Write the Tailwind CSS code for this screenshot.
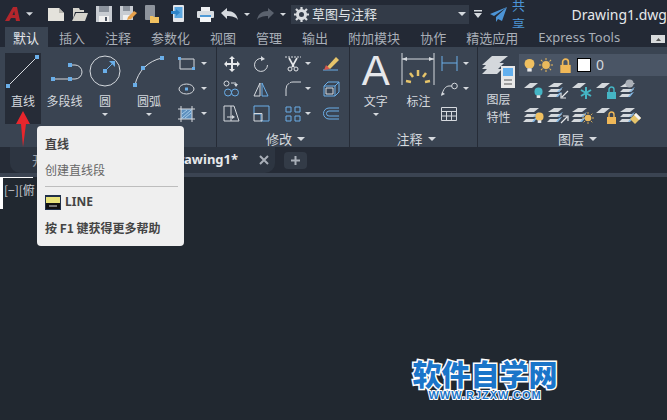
<!DOCTYPE html>
<html lang="zh">
<head>
  <meta charset="UTF-8">
  <title>Drawing1.dwg</title>
  <script src="https://cdn.jsdelivr.net/npm/@tailwindcss/browser@4"></script>
</head>
<body class="bg-[#212830]">
  <svg class="hidden">
    <symbol id="caret" viewBox="0 0 8 4"><path d="M0 0h8L4 4z" fill="#d5d9de"/></symbol>
    <symbol id="sheet" viewBox="0 0 24 18"><path d="M7 1h8L9 6H1z" fill="#d4d8dc"/></symbol>
    <symbol id="stack" viewBox="0 0 24 18"><path d="M7 1h9l-5 4H1zM4 7h11l-3 3H1zM3 12h10l-3 3H0z" fill="#d4d8dc"/><path d="M14 6l2-1-4 5h-2zM12 11l3-1-4 5H9z" fill="#7fb2dd"/></symbol>
    <symbol id="bulb" viewBox="0 0 10 12"><circle cx="5" cy="4.5" r="4.5"/><rect x="3" y="8.5" width="4" height="3" fill="#e8e8e8"/></symbol>
    <symbol id="lock" viewBox="0 0 11 13"><path d="M3 6V3.5a2.5 2.5 0 015 0V6" fill="none" stroke="currentColor" stroke-width="1.4"/><rect x="1" y="6" width="9" height="7"/></symbol>
    <symbol id="sun" viewBox="0 0 18 18"><circle cx="9" cy="9" r="5" fill="#e9b95c"/><path d="M9 0v3M9 15v3M0 9h3M15 9h3M2.5 2.5l2 2M13.500 13.500l2 2M15.500 2.500l-2 2M4.500 13.500l-2 2" stroke="#e9b95c" stroke-width="1.300"/></symbol>
  </svg>

  <div class="relative w-[667px] h-[420px] overflow-hidden bg-[#212830] text-[#d5d9de] text-[13px] font-['Noto_Sans_CJK_SC','Liberation_Sans',sans-serif]">

    <!-- title bar -->
    <div class="flex items-center h-[28px] bg-[#232935]">
      <div class="flex items-center w-[48px] pl-[5px] gap-[5px] shrink-0">
        <svg width="16" height="14" viewBox="0 0 16 14"><path d="M0 14L8 0h4l3 14h-4l-.6-3H6l-1.700 3zM7.500 8h2.400l-.7-4z" fill="#b3262c"/></svg>
        <svg width="7" height="4"><use href="#caret"/></svg>
      </div>
      <div class="flex items-center gap-[8px] shrink-0">
        <svg width="16" height="13" viewBox="0 0 16 13"><path d="M0 0h11l5 5v8H0z" fill="#e4e2dc"/><path d="M11 0v5h5z" fill="#b6b4ae"/></svg>
        <svg width="16" height="13" viewBox="0 0 16 13"><path d="M1 0h6l1 2h4v2H3L1 11z" fill="#d5d3cc"/><path d="M4 5h12l-3 8H0z" fill="#d5d3cc"/></svg>
        <svg width="16" height="16" viewBox="0 0 16 16"><path d="M0 0h16v16H0z" fill="#c8ccd2"/><path d="M3 0h10v6H3z" fill="#8b929c"/><path d="M3 10h10v6H3z" fill="#f0f0f0"/><path d="M9 11h2v4H9z" fill="#4b5260"/></svg>
        <svg width="17" height="16" viewBox="0 0 17 16"><path d="M0 0h13v14H0z" fill="#c8ccd2"/><path d="M3 0h7v5H3z" fill="#8b929c"/><path d="M3 9h7v5H3z" fill="#f0f0f0"/><path d="M7 14l1-3 6-6 3 2-6 6z" fill="#e6a04a"/></svg>
      </div>
      <div class="flex items-center gap-[12px] ml-[8px] shrink-0">
        <svg width="14" height="18" viewBox="0 0 14 18"><rect width="10" height="15" rx="1" fill="#8d939c"/><path d="M5 11h3l1 1h5v6H5z" fill="#f0c060"/></svg>
        <svg width="14" height="18" viewBox="0 0 14 18"><rect x="2" width="11" height="17" rx="1" fill="#e4e6ea"/><rect x="3.500" y="2" width="8" height="11" fill="#5aa6e0"/><path d="M0 6h5V4l4 3.500L5 11V9H0z" fill="#2f84c8"/></svg>
        <svg width="17" height="15" viewBox="0 0 17 15"><rect x="4" width="9" height="4" fill="#eef0f2"/><rect y="4" width="17" height="7" rx="1" fill="#d8dde2"/><rect x="3" y="8" width="11" height="7" fill="#f4f6f8"/><rect x="3" y="8" width="11" height="2" fill="#4f9ad6"/></svg>
      </div>
      <svg class="ml-[7px] shrink-0" width="17" height="12" viewBox="0 0 17 12"><path d="M0 5l6-5v3c6 0 10 3 11 9-2-3-6-4-11-4v3z" fill="#d5d9de"/></svg>
      <svg class="ml-[6px] shrink-0" width="6" height="3"><use href="#caret"/></svg>
      <svg class="ml-[7px] shrink-0" width="17" height="12" viewBox="0 0 17 12"><path d="M17 5l-6-5v3C5 3 1 6 0 12c2-3 6-4 11-4v3z" fill="#5b626e"/></svg>
      <svg class="ml-[6px] shrink-0" width="6" height="3"><use href="#caret"/></svg>
      <div class="flex items-center w-[178px] h-[19px] ml-[5px] pl-[3px] bg-[#333b48] shrink-0">
        <svg width="15" height="15" viewBox="0 0 15 15"><circle cx="7.500" cy="7.500" r="4" fill="none" stroke="#d9dce0" stroke-width="3"/><path d="M7.500 0v3M7.500 12v3M0 7.500h3M12 7.500h3M2 2l2 2M11 11l2 2M13 2l-2 2M4 11l-2 2" stroke="#d9dce0" stroke-width="2.200"/></svg>
        <span class="ml-[3px] text-[#dfe2e6]">草图与注释</span>
        <svg class="ml-auto mr-[3px]" width="8" height="4"><use href="#caret"/></svg>
      </div>
      <svg class="ml-[5px] shrink-0" width="8" height="8" viewBox="0 0 8 8"><path d="M0 0h8v1.500H0z M0 3h8L4 8z" fill="#d5d9de"/></svg>
      <svg class="ml-[8px] shrink-0" width="17" height="15" viewBox="0 0 17 15"><path d="M17 0L0 7l4 2zM17 0L6 10v5l2-3 4 2z" fill="#4c94d6"/></svg>
      <span class="ml-[5px] text-[#4c94d6]">共享</span>
      <span class="ml-[43px] text-[14px] text-[#e6e8eb] font-['Noto_Sans',sans-serif] whitespace-nowrap">Drawing1.dwg</span>
    </div>

    <!-- ribbon tabs -->
    <div class="flex items-center h-[19px] bg-[#232935] text-[#a9afb8] gap-[20px] pl-[13px] relative whitespace-nowrap">
      <span class="relative text-[#e4e6ea] before:absolute before:-left-[8px] before:-right-[9px] before:-top-[1px] before:-bottom-[1px] before:bg-[#3a4452] before:-z-0"><span class="relative">默认</span></span>
      <span>插入</span><span>注释</span><span>参数化</span><span>视图</span><span>管理</span><span>输出</span><span>附加模块</span><span>协作</span><span>精选应用</span>
      <span class="font-['Noto_Sans',sans-serif]">Express Tools</span>
      <div class="absolute left-[651px] top-[7px] flex items-center justify-center w-[14px] h-[8px] bg-[#d8dadc]">
        <svg width="5" height="3" viewBox="0 0 5 3"><path d="M0 3h5L2.500 0z" fill="#555"/></svg>
      </div>
    </div>

    <!-- ribbon -->
    <div class="flex h-[100px] bg-[#3a4452] text-[12px] text-[#d5d9de] leading-[18px]">

      <!-- draw -->
      <div class="flex w-[217px] pl-[5px] border-r border-[#262c37] shrink-0">
        <div class="flex flex-col items-center w-[36px] h-[71px] mt-[6px] bg-[#262c37]">
          <svg width="36" height="36" viewBox="0 0 36 36"><path d="M3 33L32 4" stroke="#d5d9de"/><rect x="1" y="31" width="4" height="4" fill="#6aaee8"/><rect x="30" y="2" width="4" height="4" fill="#6aaee8"/></svg>
          <span class="mt-[3px]">直线</span>
        </div>
        <div class="flex flex-col items-center w-[47px] pt-[6px]">
          <svg width="36" height="36" viewBox="0 0 36 36"><path d="M8 26h20a7 7 0 000-14h-3" fill="none" stroke="#d5d9de"/><rect x="4" y="24" width="4" height="4" fill="#6aaee8"/><rect x="21" y="24" width="4" height="4" fill="#6aaee8"/><rect x="21" y="10" width="4" height="4" fill="#6aaee8"/></svg>
          <span class="mt-[3px]">多段线</span>
        </div>
        <div class="flex flex-col items-center w-[34px] pt-[6px]">
          <svg width="34" height="36" viewBox="0 0 34 36"><circle cx="17" cy="18" r="15" fill="none" stroke="#d5d9de"/><path d="M17 18l8-8" stroke="#6aaee8"/><path d="M21 8h6v6z" fill="#6aaee8"/><rect x="15" y="16" width="4" height="4" fill="#6aaee8"/></svg>
          <span class="mt-[3px]">圆</span>
          <svg class="mt-[3px]" width="6" height="3"><use href="#caret"/></svg>
        </div>
        <div class="flex flex-col items-center w-[54px] pt-[6px]">
          <svg width="36" height="36" viewBox="0 0 36 36"><path d="M4 32C7 18 17 8 31 5" fill="none" stroke="#d5d9de"/><rect x="2" y="30" width="4" height="4" fill="#6aaee8"/><rect x="10" y="13" width="4" height="4" fill="#6aaee8"/><rect x="29" y="3" width="4" height="4" fill="#6aaee8"/></svg>
          <span class="mt-[3px]">圆弧</span>
          <svg class="mt-[3px]" width="6" height="3"><use href="#caret"/></svg>
        </div>
        <div class="flex flex-col w-[38px] pt-[4px]">
          <div class="flex items-center h-[25px] gap-[6px] pl-[2px]">
            <svg width="17" height="14" viewBox="0 0 17 14"><path d="M2 2h14v10H2z" fill="none" stroke="#d5d9de"/><rect x="0" y="0" width="3" height="3" fill="#6aaee8"/><rect x="14" y="10" width="3" height="3" fill="#6aaee8"/></svg>
            <svg width="6" height="3"><use href="#caret"/></svg>
          </div>
          <div class="flex items-center h-[25px] gap-[6px] pl-[2px]">
            <svg width="17" height="14" viewBox="0 0 17 14"><ellipse cx="8.500" cy="7" rx="7.500" ry="5" fill="none" stroke="#d5d9de"/><rect x="7" y="5.500" width="3" height="3" fill="#6aaee8"/></svg>
            <svg width="6" height="3"><use href="#caret"/></svg>
          </div>
          <div class="flex items-center h-[25px] gap-[6px] pl-[2px]">
            <svg width="17" height="16" viewBox="0 0 17 16"><path d="M3 3h11v10H3z" fill="#5d8fbd"/><path d="M3 0v16M14 0v16M0 3h17M0 13h17" stroke="#d5d9de"/><path d="M4 12l9-8M7 12l6-5M4 8l5-4" stroke="#a6cbe9"/></svg>
            <svg width="6" height="3"><use href="#caret"/></svg>
          </div>
        </div>
      </div>

      <!-- modify -->
      <div class="flex flex-col w-[133px] border-r border-[#262c37] shrink-0">
        <div class="h-[83px] pt-[4px] grid grid-cols-[29px_30px_40px_30px] grid-rows-[25px_25px_25px] items-center">
          <svg class="mx-auto" width="16" height="16" viewBox="0 0 16 16"><path d="M8 0l3 3H9v4h4V5l3 3-3 3V9H9v4h2l-3 3-3-3h2V9H3v2L0 8l3-3v2h4V3H5z" fill="#e6e8eb"/></svg>
          <svg class="mx-auto" width="16" height="16" viewBox="0 0 16 16"><path d="M9 2.500A6.500 6.500 0 1014.500 9" fill="none" stroke="#d5d9de"/><path d="M8 0l4 3-4 2z" fill="#d5d9de"/></svg>
          <div class="flex items-center gap-[4px] pl-[9px]">
            <svg width="16" height="17" viewBox="0 0 16 17"><path d="M0 2h16" stroke="#d5d9de" stroke-dasharray="2 1"/><path d="M4 3l5 9M12 3l-5 9" stroke="#e6e8eb" stroke-width="1.600"/><circle cx="5" cy="14" r="2" fill="none" stroke="#e6e8eb"/><circle cx="11" cy="14" r="2" fill="none" stroke="#e6e8eb"/></svg>
            <svg width="6" height="3"><use href="#caret"/></svg>
          </div>
          <svg class="mx-auto" width="18" height="16" viewBox="0 0 18 16"><path d="M1 14h15" stroke="#6aaee8"/><path d="M4 12L14 1l3 3-9 9z" fill="#e6c46a"/><path d="M2 14l2-5 4 4z" fill="#d5574d"/></svg>

          <svg class="mx-auto" width="17" height="17" viewBox="0 0 17 17"><path d="M8 3h5v2" fill="none" stroke="#d5d9de"/><path d="M11 4l2 3 2-3z" fill="#d5d9de"/><circle cx="3.500" cy="3.500" r="2.500" fill="none" stroke="#d5d9de"/><circle cx="5" cy="12.500" r="3.500" fill="none" stroke="#6aaee8"/><circle cx="12" cy="12.500" r="3.500" fill="none" stroke="#6aaee8"/></svg>
          <svg class="mx-auto" width="16" height="16" viewBox="0 0 16 16"><path d="M7 2v13H1z" fill="none" stroke="#d5d9de"/><path d="M9 2v13h6z" fill="none" stroke="#6aaee8"/></svg>
          <div class="flex items-center gap-[4px] pl-[9px]">
            <svg width="16" height="17" viewBox="0 0 16 17"><path d="M1 16V9a7 7 0 017-7h8" fill="none" stroke="#d5d9de" stroke-dasharray="14 1"/></svg>
            <svg width="6" height="3"><use href="#caret"/></svg>
          </div>
          <svg class="mx-auto" width="17" height="16" viewBox="0 0 17 16"><path d="M1 5h11v10H1zM1 5l4-4h11v10l-4 4M12 5l4-4" fill="none" stroke="#6aaee8"/><path d="M3 7h7v6H3z" fill="none" stroke="#d5d9de"/></svg>

          <svg class="mx-auto" width="17" height="17" viewBox="0 0 17 17"><path d="M1 1h7v15H1zM8 1h3l5 15H8" fill="none" stroke="#d5d9de"/><path d="M4 12h6" stroke="#d5d9de"/><path d="M9 10l3 2-3 2z" fill="#d5d9de"/></svg>
          <svg class="mx-auto" width="17" height="17" viewBox="0 0 17 17"><path d="M1 1h15v15H8V9H1z" fill="none" stroke="#6aaee8"/><path d="M1 8.500h8v7.500H1z" fill="none" stroke="#d5d9de"/></svg>
          <div class="flex items-center gap-[4px] pl-[9px]">
            <svg width="16" height="16" viewBox="0 0 16 16"><path d="M1 1h5v5H1zM10 1h5v5h-5zM1 10h5v5H1zM10 10h5v5h-5z" fill="none" stroke="#6aaee8"/></svg>
            <svg width="6" height="3"><use href="#caret"/></svg>
          </div>
          <svg class="mx-auto" width="17" height="13" viewBox="0 0 17 13"><path d="M16 1H6a5.500 5.500 0 000 11h10M16 4H6a2.500 2.500 0 000 5h10" fill="none" stroke="#6aaee8"/></svg>
        </div>
        <div class="flex items-center justify-center gap-[5px] h-[17px] pl-[5px] text-[13px]"><span>修改</span><svg width="8" height="4"><use href="#caret"/></svg></div>
      </div>

      <!-- annotate -->
      <div class="flex flex-col w-[128px] border-r border-[#262c37] shrink-0">
        <div class="flex h-[83px]">
          <div class="flex flex-col items-center w-[50px] pl-[2px] pt-[6px]">
            <span class="h-[36px] text-[42px] leading-[36px] text-[#e6e8eb] font-['Liberation_Sans',sans-serif]">A</span>
            <span class="mt-[3px]">文字</span>
            <svg class="mt-[3px]" width="6" height="3"><use href="#caret"/></svg>
          </div>
          <div class="flex flex-col items-center w-[38px] pt-[6px]">
            <svg width="34" height="36" viewBox="0 0 34 36"><path d="M1 0v32M33 0v32M1 6h32" stroke="#d5d9de"/><path d="M1 6l5-2v4zM33 6l-5-2v4z" fill="#d5d9de"/><path d="M17 17v6M9 20l3 4M25 20l-3 4M5 28l5 1M29 28l-5 1" stroke="#e6c46a" stroke-width="2.500"/></svg>
            <span class="mt-[3px]">标注</span>
          </div>
          <div class="flex flex-col w-[40px] pt-[4px]">
            <div class="flex items-center h-[25px] gap-[5px] pl-[4px]">
              <svg width="17" height="15" viewBox="0 0 17 15"><path d="M1 0v15M16 0v15" stroke="#6aaee8"/><path d="M1 7h15" stroke="#6aaee8"/></svg>
              <svg width="6" height="3"><use href="#caret"/></svg>
            </div>
            <div class="flex items-center h-[25px] gap-[5px] pl-[4px]">
              <svg width="17" height="15" viewBox="0 0 17 15"><path d="M1 14c1-6 4-9 7-9h3" fill="none" stroke="#d5d9de"/><path d="M0 15l1-4 3 2z" fill="#d5d9de"/><circle cx="13.500" cy="5" r="2.800" fill="none" stroke="#d5d9de"/></svg>
              <svg width="6" height="3"><use href="#caret"/></svg>
            </div>
            <div class="flex items-center h-[25px] pl-[4px]">
              <svg width="16" height="14" viewBox="0 0 16 14"><path d="M.5.500h15v13H.500zM.500 4.500h15M.500 9h15M5.500 4.500v9M10.500 4.500v9" fill="none" stroke="#d5d9de"/></svg>
            </div>
          </div>
        </div>
        <div class="flex items-center justify-center gap-[5px] h-[17px] pl-[5px] text-[13px]"><span>注释</span><svg width="8" height="4"><use href="#caret"/></svg></div>
      </div>

      <!-- layers -->
      <div class="flex flex-col grow min-w-0">
        <div class="flex h-[83px]">
          <div class="flex flex-col items-center w-[41px] shrink-0 pt-[9px]">
            <svg width="34" height="33" viewBox="0 0 34 33"><path d="M10 0h16l-11 9H0zM6 7h16l-6 6H0zM5 13h15l-5 5H0z" fill="#d4d8dc"/><rect x="19" y="10" width="14" height="22" fill="#e8e8e8"/><rect x="21" y="12" width="10" height="8" fill="#63b0ee"/><path d="M22 24h8M22 28h8" stroke="#555"/></svg>
            <span class="mt-[1px] leading-[18px]">图层</span>
            <span class="leading-[18px]">特性</span>
          </div>
          <div class="flex flex-col grow min-w-0">
            <div class="flex items-center h-[22px] mt-[7px] pl-[5px] bg-[#4a5565]">
              <svg class="text-[#f0c060] fill-current" width="11" height="15"><use href="#bulb"/></svg>
              <svg class="ml-[4px]" width="14" height="14"><use href="#sun"/></svg>
              <svg class="ml-[6px] text-[#f0b858] fill-current" width="13" height="15"><use href="#lock"/></svg>
              <span class="ml-[5px] w-[14px] h-[14px] bg-white border border-black"></span>
              <span class="ml-[5px] text-[14px] text-[#d5d9de] font-['Noto_Sans',sans-serif]">0</span>
            </div>
            <div class="grid grid-cols-[repeat(5,24px)] grid-rows-[25px_25px] mt-[2px] ml-[4px] items-center">
              <div class="relative w-[24px] h-[18px]"><svg width="24" height="18"><use href="#sheet"/></svg><svg class="absolute left-[11px] top-[5px] text-[#45b5c4] fill-current" width="9" height="12"><use href="#bulb"/></svg></div>
              <div class="relative w-[24px] h-[18px]"><svg width="24" height="18"><use href="#stack"/></svg><svg class="absolute left-[13px] top-[8px]" width="9" height="9" viewBox="0 0 9 9"><path d="M8 1L2 7M1 3v5h5" fill="none" stroke="#e6e8eb" stroke-width="1.200"/></svg></div>
              <div class="relative w-[24px] h-[18px]"><svg width="24" height="18"><use href="#sheet"/></svg><svg class="absolute left-[9px] top-[5px]" width="12" height="12" viewBox="0 0 12 12"><path d="M6 0v12M1 3l10 6M11 3L1 9" stroke="#45b5c4" stroke-width="2"/></svg></div>
              <div class="relative w-[24px] h-[18px]"><svg width="24" height="18"><use href="#sheet"/></svg><svg class="absolute left-[11px] top-[4px] text-[#45b5c4] fill-current" width="11" height="13"><use href="#lock"/></svg></div>
              <div class="relative w-[24px] h-[18px]"><svg width="24" height="18"><use href="#stack"/></svg><svg class="absolute left-[6px] -top-[3px]" width="9" height="9"><circle cx="4.500" cy="4.500" r="4" fill="#aab0b8"/></svg></div>
              <div class="relative w-[24px] h-[18px]"><svg width="24" height="18"><use href="#stack"/></svg><svg class="absolute left-[12px] top-[5px] text-[#f0c060] fill-current" width="9" height="12"><use href="#bulb"/></svg></div>
              <div class="relative w-[24px] h-[18px]"><svg width="24" height="18"><use href="#stack"/></svg><svg class="absolute left-[13px] top-[8px]" width="9" height="9" viewBox="0 0 9 9"><path d="M1 8l6-6M3 1h5v5" fill="none" stroke="#e6e8eb" stroke-width="1.200"/></svg></div>
              <div class="relative w-[24px] h-[18px]"><svg width="24" height="18"><use href="#stack"/></svg><svg class="absolute left-[11px] top-[5px]" width="12" height="12"><use href="#sun"/></svg></div>
              <div class="relative w-[24px] h-[18px]"><svg width="24" height="18"><use href="#sheet"/></svg><svg class="absolute left-[11px] top-[4px] text-[#f0b858] fill-current" width="11" height="13"><use href="#lock"/></svg></div>
              <div class="relative w-[24px] h-[18px]"><svg width="24" height="18"><use href="#stack"/></svg><svg class="absolute left-[11px] top-[6px]" width="11" height="11" viewBox="0 0 11 11"><path d="M0 6l6-6 5 5-6 6z" fill="#e6c46a"/><path d="M6 0l5 5-2 2-5-5z" fill="#f2f2f2"/></svg></div>
            </div>
          </div>
        </div>
        <div class="flex items-center justify-center gap-[5px] h-[17px] pl-[10px] text-[13px]"><span>图层</span><svg width="8" height="4"><use href="#caret"/></svg></div>
      </div>
    </div>

    <!-- document tabs -->
    <div class="flex items-center h-[26px] bg-[#252b36] whitespace-nowrap">
      <div class="flex items-center h-full w-[265px] ml-[10px] pl-[22px] bg-[#2d3541] rounded-bl-[10px] rounded-br-[10px] shrink-0">
        <span class="text-[#9aa0a8]">开</span>
        <span class="ml-[124px] text-[13px] font-bold text-[#e6e8eb] font-['Noto_Sans',sans-serif]">Drawing1*</span>
        <svg class="ml-[21px]" width="10" height="10" viewBox="0 0 10 10"><path d="M1 1l8 8M9 1l-8 8" stroke="#a9afb8" stroke-width="2"/></svg>
      </div>
      <div class="flex items-center justify-center w-[23px] h-[17px] ml-[9px] bg-[#333b47] rounded-[4px]">
        <svg width="9" height="9" viewBox="0 0 9 9"><path d="M4.500 0v9M0 4.500h9" stroke="#a9afb8" stroke-width="2"/></svg>
      </div>
    </div>
    <div class="h-[4px] bg-[#3b4452]"></div>

    <!-- viewport -->
    <div class="relative h-[243px] bg-[#212830]">
      <div class="w-[33px] h-[32px] border-l-[3px] border-t border-white"></div>
      <span class="absolute left-[4px] top-[4px] text-[12px] leading-[18px] text-[#c8ccd2]">[−][俯</span>
      <div class="absolute left-[412px] top-[180px] flex flex-col items-center w-[146px] text-[#1a75c9] font-bold">
        <span class="text-[29px] leading-[33px] font-black [-webkit-text-stroke:3px_white] [paint-order:stroke_fill]">软件自学网</span>
        <span class="text-[11px] leading-[11px] tracking-[1px] font-['Liberation_Sans',sans-serif] [-webkit-text-stroke:2px_white] [paint-order:stroke_fill]">WWW.RJZXW.COM</span>
      </div>
    </div>

    <!-- red arrow -->
    <svg class="absolute left-[15px] top-[110px]" width="17" height="38" viewBox="0 0 17 38"><path d="M8 1l7 13h-4l-3 23-2-23H1z" fill="#e8262c"/></svg>

    <!-- tooltip -->
    <div class="absolute left-[37px] top-[126px] w-[147px] h-[120px] px-[8px] bg-[#efefef] rounded-[4px] text-[12px] text-[#555]">
      <div class="mt-[9px] h-[18px] leading-[18px] font-bold text-[#444]">直线</div>
      <div class="mt-[8px] h-[18px] leading-[18px] text-[#666]">创建直线段</div>
      <div class="mt-[7px] mr-[-2px] border-t border-[#bdbdbd]"></div>
      <div class="flex items-center mt-[7px] h-[16px] gap-[4px]">
        <svg width="16" height="15" viewBox="0 0 16 15"><rect width="16" height="15" fill="#20304a"/><rect x="1" y="2" width="14" height="6" fill="#e8e27a"/><rect x="1" y="8" width="14" height="6" fill="#111"/><path d="M4 11h8" stroke="#ddd"/></svg>
        <span class="font-bold text-[#444] font-['Noto_Sans',sans-serif]">LINE</span>
      </div>
      <div class="mt-[9px] h-[18px] leading-[18px] font-bold text-[#444] whitespace-nowrap">按 F1 键获得更多帮助</div>
    </div>
  </div>
</body>
</html>
